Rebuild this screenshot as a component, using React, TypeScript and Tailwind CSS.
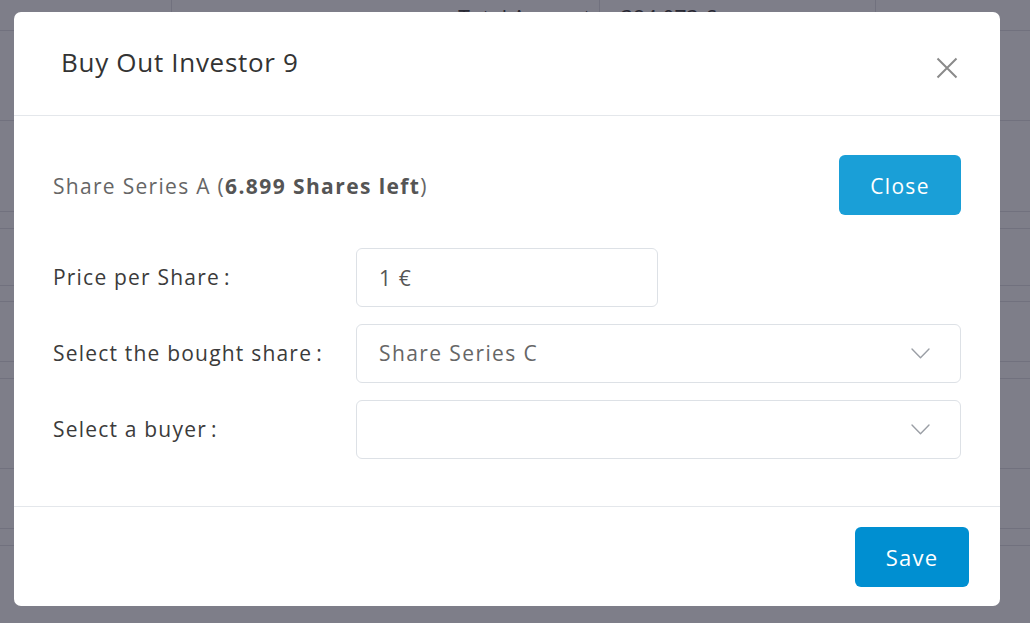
import React, { useState } from 'react';

const font = { fontFamily: '"Open Sans", "Noto Sans", Arial, sans-serif' };

const Chevron: React.FC = () => (
  <svg width="19" height="11" viewBox="0 0 19 11" fill="none" className="shrink-0">
    <path d="M1 1 L9.5 9.8 L18 1" stroke="#9a9ea5" strokeWidth="1.4" strokeLinecap="round" strokeLinejoin="round" />
  </svg>
);

const Row: React.FC<{ label: string; children: React.ReactNode }> = ({ label, children }) => (
  <div className="flex items-center">
    <div className="w-[303px] shrink-0 text-[21px] tracking-[1.2px] text-[#3b3b3b]">
      {label}
      <span className="ml-[4px]">:</span>
    </div>
    {children}
  </div>
);

const BuyOutPage: React.FC = () => {
  const [price, setPrice] = useState('1 €');

  return (
    <div className="relative w-[1030px] h-[623px] overflow-hidden bg-white" style={font}>
      {/* table in the page behind the dialog */}
      <div className="flex flex-col">
        <div className="flex h-[31px] border-b border-[#e2e2e6]">
          <div className="w-[172px] h-full border-r border-[#e2e2e6]" />
          <div className="w-[428px] h-full border-r border-[#e2e2e6] flex items-end justify-end pr-[8px] text-[21px] leading-[24px] text-[#444]">
            Total Amount
          </div>
          <div className="w-[276px] h-full border-r border-[#e2e2e6] flex items-end pl-[21px] text-[21px] leading-[24px] text-[#444]">
            384.073 €
          </div>
        </div>
        <div className="h-[90px] border-b border-[#e2e2e6]" />
        <div className="h-[91px] border-b border-[#e2e2e6]" />
        <div className="h-[17px] border-b border-[#e2e2e6]" />
        <div className="h-[57px] border-b border-[#e2e2e6]" />
        <div className="h-[16px] border-b border-[#e2e2e6]" />
        <div className="h-[60px] border-b border-[#e2e2e6]" />
        <div className="h-[17px] border-b border-[#e2e2e6]" />
        <div className="h-[90px] border-b border-[#e2e2e6]" />
        <div className="h-[60px] border-b border-[#e2e2e6]" />
        <div className="h-[17px] border-b border-[#e2e2e6]" />
      </div>

      {/* modal backdrop */}
      <div className="absolute inset-0 bg-[rgba(20,20,40,0.55)] pt-[12px] pl-[14px]">
        <div className="w-[986px] h-[594px] bg-white rounded-[7px] flex flex-col overflow-hidden">
          <div className="h-[104px] shrink-0 border-b border-[#e4e7eb] flex items-start justify-between pl-[47px] pr-[42px]">
            <h2 className="mt-[32px] text-[26px] leading-[36px] text-[#333] tracking-[0.7px]">Buy Out Investor 9</h2>
            <button className="mt-[45px] w-[22px] h-[22px] flex items-center justify-center">
              <svg width="22" height="22" viewBox="0 0 22 22">
                <path d="M1.5 1.5 L20.5 20.5 M20.5 1.5 L1.5 20.5" stroke="#8a8a8a" strokeWidth="2" />
              </svg>
            </button>
          </div>

          <div className="flex-1 px-[39px] pt-[39px] flex flex-col">
            <div className="flex items-center justify-between">
              <p className="pt-[3px] text-[21px] tracking-[1.3px] text-[#666]">
                Share Series A (<span className="font-bold text-[#555] tracking-[1.4px]">6.899 Shares left</span>)
              </p>
              <button className="w-[122px] h-[60px] pt-[3px] rounded-[6px] bg-[#1a9fd7] text-white text-[21px] tracking-[1.3px]">Close</button>
            </div>

            <div className="mt-[33px] flex flex-col gap-[17px]">
              <Row label="Price per Share">
                <input
                  value={price}
                  onChange={(e) => setPrice(e.target.value)}
                  className="w-[302px] h-[59px] rounded-[6px] border border-[#dde1e6] px-[22px] text-[21px] tracking-[1.2px] text-[#555] outline-none"
                  style={font}
                />
              </Row>
              <Row label="Select the bought share">
                <div className="flex-1 h-[59px] rounded-[6px] border border-[#dde1e6] pl-[22px] pr-[30px] flex items-center justify-between">
                  <span className="text-[21px] tracking-[1.4px] text-[#666]">Share Series C</span>
                  <Chevron />
                </div>
              </Row>
              <Row label="Select a buyer">
                <div className="flex-1 h-[59px] rounded-[6px] border border-[#dde1e6] pl-[22px] pr-[30px] flex items-center justify-end">
                  <Chevron />
                </div>
              </Row>
            </div>
          </div>

          <div className="h-[100px] shrink-0 border-t border-[#e4e7eb] flex items-start justify-end pt-[20px] pr-[31px]">
            <button className="w-[114px] h-[60px] rounded-[6px] bg-[#008fd1] text-white text-[22px] tracking-[1.2px]">Save</button>
          </div>
        </div>
      </div>
    </div>
  );
};

export default function App() {
  return <BuyOutPage />;
}
